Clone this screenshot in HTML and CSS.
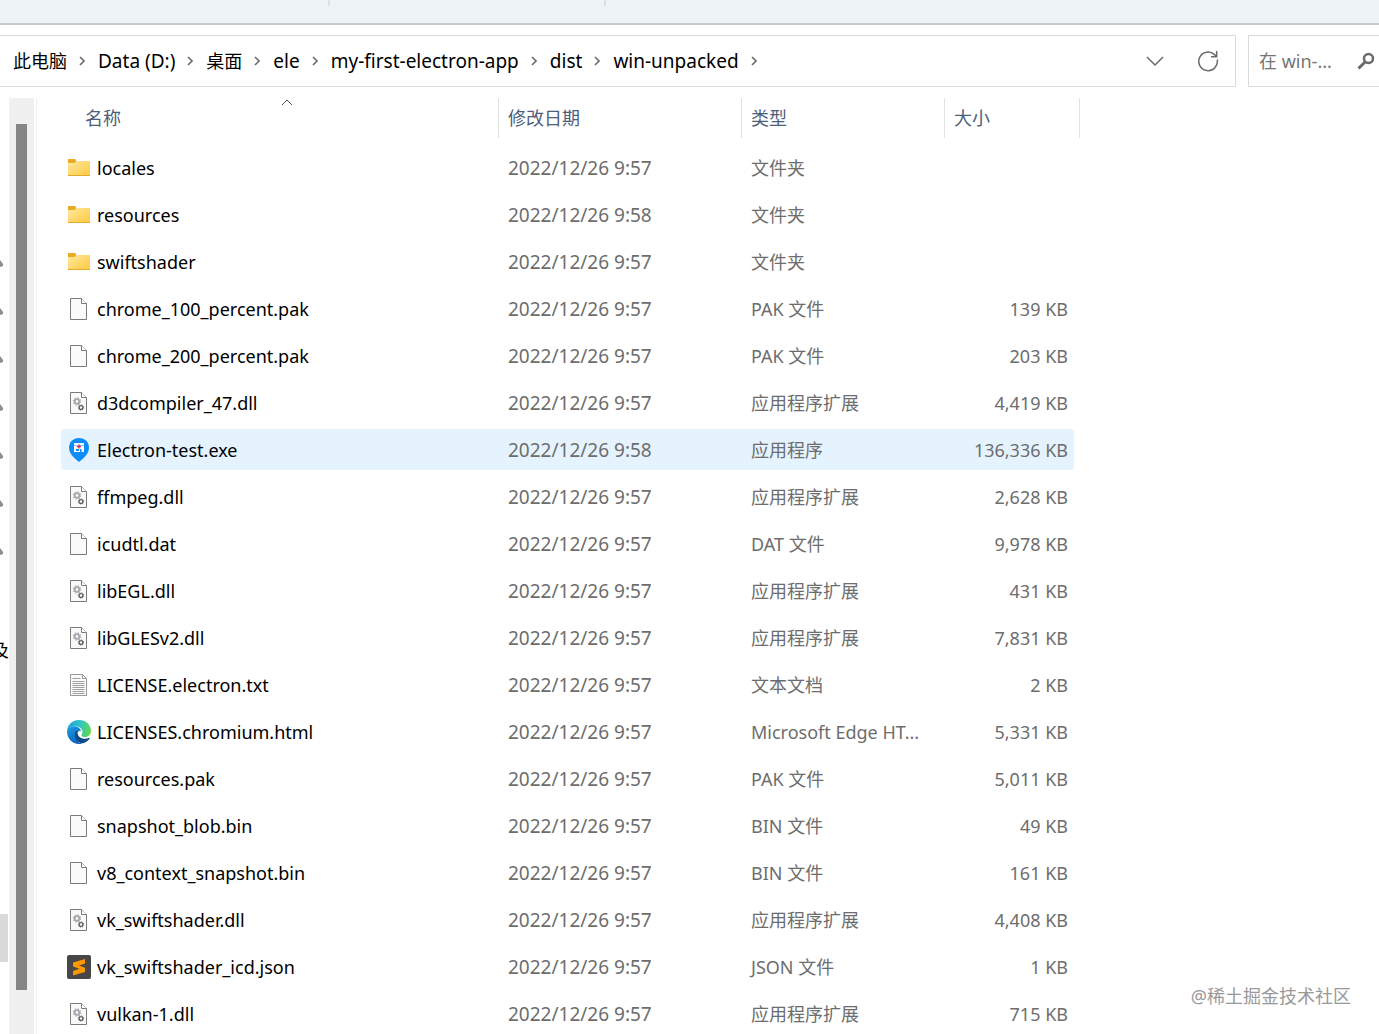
FILE: index.html
```html
<!DOCTYPE html>
<html lang="zh-CN">
<head>
    <meta charset="UTF-8">
    <meta name="viewport" content="width=device-width, initial-scale=1.0">
    <title>win-unpacked</title>
    <link rel="stylesheet" href="styles.css">
</head>
<body>
    <!-- icons -->
    <svg class="defs" aria-hidden="true">
        <defs>
            <linearGradient id="folderFill" x1="0" y1="0" x2="1" y2="1">
                <stop offset="0" stop-color="#ffe8a0"/><stop offset="1" stop-color="#fdc93f"/>
            </linearGradient>
            <linearGradient id="edgeTop" x1="0" y1="0.3" x2="1" y2="0.5">
                <stop offset="0" stop-color="#1e9fe0"/><stop offset="0.5" stop-color="#2fc3c8"/><stop offset="1" stop-color="#62d94e"/>
            </linearGradient>
            <linearGradient id="edgeLeft" x1="0" y1="0" x2="0.6" y2="1">
                <stop offset="0" stop-color="#1b9de2"/><stop offset="1" stop-color="#0f62b8"/>
            </linearGradient>
        </defs>
        <symbol id="folder" viewBox="0 0 24 24">
            <path d="M1 3h7l1 1v4H1z" fill="#e9ab26"/>
            <path d="M1 7h7l1-2h14v15H1z" fill="url(#folderFill)"/>
            <path d="M1 19.500h22" stroke="#e3a92f"/>
        </symbol>
        <symbol id="file" viewBox="0 0 24 24">
            <path d="M3.500 1.500h11l5 5v16h-16z" fill="#fafafa" stroke="#7b7b7b"/>
            <path d="M14.500 1.500v5h5" fill="#fff" stroke="#7b7b7b"/>
        </symbol>
        <symbol id="dll" viewBox="0 0 24 24">
            <use href="#file"/>
            <circle cx="10" cy="10.500" r="2.300" fill="none" stroke="#a4a9ad" stroke-width="1.800"/>
            <circle cx="10" cy="10.500" r="3.600" fill="none" stroke="#a4a9ad" stroke-width="1.200" stroke-dasharray="1.400 1.427"/>
            <circle cx="14" cy="16.500" r="1.900" fill="none" stroke="#5f6366" stroke-width="1.300"/>
            <circle cx="14" cy="16.500" r="2.700" fill="none" stroke="#5f6366" stroke-width=".8" stroke-dasharray="1.060 1.060"/>
        </symbol>
        <symbol id="txt" viewBox="0 0 24 24">
            <path d="M3.500 1.500h12l4 4v17h-16z" fill="#fafafa" stroke="#9a9a9a"/>
            <path d="M15.500 1.500v4h4" fill="none" stroke="#9a9a9a"/>
            <path d="M5.500 5.500h8M5.500 8.500h12M5.500 10.500h12M5.500 12.500h12M5.500 14.500h12M5.500 16.500h12M5.500 18.500h12M5.500 20.500h12" stroke="#a0a0a0"/>
        </symbol>
        <symbol id="exe" viewBox="0 0 24 24">
            <path d="M12 0C6 0 2 4.400 2 9.800c0 4.200 2.600 7.600 5.600 10.400L12 24l4.400-3.800c3-2.800 5.600-6.200 5.600-10.400C22 4.400 18 0 12 0z" fill="#0a8cfb"/>
            <path d="M7 5h10v2H7zM7 7.500h10V14h-2.500v-3H13v3H7z" fill="#fff"/>
            <path d="M9 11h3v2H9z" fill="#0a8cfb"/>
            <path d="M11.300 6.500h1.400V8H14v1.300h-1.300v1.300h-1.400V9.300H10V8h1.300z" fill="#d8274b"/>
        </symbol>
        <symbol id="edge" viewBox="0 0 24 24">
            <path d="M12 0C5.500 0 .6 4.600 0 11c1.500-3 4.600-4.600 8.500-4.600 4.500 0 7 2.600 7 5.600 0 1.600-1 2.200-1 3.200 0 1.200 1.500 1.900 3.500 1.900 3.500 0 6-2.400 6-6.300C24 4.700 18.600 0 12 0z" fill="url(#edgeTop)"/>
            <path d="M0 11.500C0 18.500 5.400 24 12 24c1.200 0 2.400-.2 3.500-.6-4.500 0-6-3.600-6-7.600 0-3.300 1.300-5.200 4.600-4.800C13.100 8 10.500 6.600 7.600 6.600 3.400 6.600.6 9 0 11.500z" fill="url(#edgeLeft)"/>
            <path d="M8.500 12c-2 6 2 11.600 7.500 11.300 3-.8 5.400-2.600 6.800-5 .2-.5-.1-.8-.6-.6-1.400.7-2.800 1-4.200 1-4.500 0-7.500-2.700-7.500-6 0-.9.300-1.700.9-2.300-1.500.1-2.500.6-2.900 1.600z" fill="#114a8b"/>
        </symbol>
        <symbol id="sublime" viewBox="0 0 24 24">
            <rect width="24" height="24" rx="2" fill="#474747"/>
            <path d="M18 4v4.500l-6 2 6 2.300V17L6 20.500V16l6.500-2.200L6 11.500v-4z" fill="#ff9800"/>
        </symbol>
        <symbol id="arrow" viewBox="0 0 7 10">
            <path d="M1 1l4 4-4 4" fill="none" stroke="#6d6d6d" stroke-width="1.700"/>
        </symbol>
        <symbol id="pin" viewBox="0 0 8 10">
            <path d="M1 2l3-1 3 4v2L4 8z" fill="#8c8c8c"/>
        </symbol>
    </svg>

    <div class="tabs"><span class="tick"></span><span class="tick"></span></div>

    <div class="toolbar">
        <div class="address">
            <nav class="crumbs">
                <svg class="arrow"><use href="#arrow"/></svg>
                <a href="#" class="cjk">此电脑</a>
                <svg class="arrow"><use href="#arrow"/></svg>
                <a href="#">Data (D:)</a>
                <svg class="arrow"><use href="#arrow"/></svg>
                <a href="#" class="cjk">桌面</a>
                <svg class="arrow"><use href="#arrow"/></svg>
                <a href="#">ele</a>
                <svg class="arrow"><use href="#arrow"/></svg>
                <a href="#">my-first-electron-app</a>
                <svg class="arrow"><use href="#arrow"/></svg>
                <a href="#">dist</a>
                <svg class="arrow"><use href="#arrow"/></svg>
                <a href="#">win-unpacked</a>
                <svg class="arrow"><use href="#arrow"/></svg>
            </nav>
            <button type="button" aria-label="历史记录">
                <svg width="20" height="20" viewBox="0 0 20 20"><path d="M2 6l8 8 8-8" fill="none" stroke="#6a6a6a" stroke-width="1.500"/></svg>
            </button>
            <button type="button" aria-label="刷新">
                <svg width="22" height="22" viewBox="0 0 22 22"><path d="M20.200 9.500A9.300 9.300 0 1 1 17.500 4.600L19.500 6.500M19.700 1v5.700H14" fill="none" stroke="#6a6a6a" stroke-width="1.500"/></svg>
            </button>
        </div>
        <div class="search">
            <input type="text" aria-label="搜索" placeholder="在 win-...">
            <button type="button" aria-label="搜索">
                <svg width="18" height="18" viewBox="0 0 18 18"><circle cx="11.500" cy="6.500" r="4.500" fill="none" stroke="#6a6a6a" stroke-width="2.500"/><path d="M8.300 9.700L1.500 16.500" stroke="#6a6a6a" stroke-width="3"/></svg>
            </button>
        </div>
    </div>

    <div class="main">
        <ul class="sidebar">
            <li><svg class="pin"><use href="#pin"/></svg></li>
            <li><svg class="pin"><use href="#pin"/></svg></li>
            <li><svg class="pin"><use href="#pin"/></svg></li>
            <li><svg class="pin"><use href="#pin"/></svg></li>
            <li><svg class="pin"><use href="#pin"/></svg></li>
            <li><svg class="pin"><use href="#pin"/></svg></li>
            <li><svg class="pin"><use href="#pin"/></svg></li>
            <li class="recent">及</li>
            <li class="current"></li>
        </ul>
        <div class="scrollbar"><div class="thumb"></div></div>

        <div class="content">
            <table class="files">
                <colgroup>
                    <col class="col-name"><col class="col-date"><col class="col-type"><col class="col-size"><col class="col-end">
                </colgroup>
                <thead>
                    <tr>
                        <th><div class="head name-head">名称
                            <svg class="sort" width="12" height="8" viewBox="0 0 12 8"><path d="M1 7l5-5 5 5" fill="none" stroke="#555"/></svg>
                        </div></th>
                        <th><div class="head">修改日期</div></th>
                        <th><div class="head">类型</div></th>
                        <th colspan="2"><div class="head">大小</div></th>
                    </tr>
                </thead>
                <tbody>
                    <tr><td><div class="name"><svg><use href="#folder"/></svg>locales</div></td><td class="date">2022/12/26 9:57</td><td>文件夹</td><td class="size"></td></tr>
                    <tr><td><div class="name"><svg><use href="#folder"/></svg>resources</div></td><td class="date">2022/12/26 9:58</td><td>文件夹</td><td class="size"></td></tr>
                    <tr><td><div class="name"><svg><use href="#folder"/></svg>swiftshader</div></td><td class="date">2022/12/26 9:57</td><td>文件夹</td><td class="size"></td></tr>
                    <tr><td><div class="name"><svg><use href="#file"/></svg>chrome_100_percent.pak</div></td><td class="date">2022/12/26 9:57</td><td>PAK 文件</td><td class="size">139 KB</td></tr>
                    <tr><td><div class="name"><svg><use href="#file"/></svg>chrome_200_percent.pak</div></td><td class="date">2022/12/26 9:57</td><td>PAK 文件</td><td class="size">203 KB</td></tr>
                    <tr><td><div class="name"><svg><use href="#dll"/></svg>d3dcompiler_47.dll</div></td><td class="date">2022/12/26 9:57</td><td>应用程序扩展</td><td class="size">4,419 KB</td></tr>
                    <tr class="selected"><td><div class="name"><svg><use href="#exe"/></svg>Electron-test.exe</div></td><td class="date">2022/12/26 9:58</td><td>应用程序</td><td class="size">136,336 KB</td></tr>
                    <tr><td><div class="name"><svg><use href="#dll"/></svg>ffmpeg.dll</div></td><td class="date">2022/12/26 9:57</td><td>应用程序扩展</td><td class="size">2,628 KB</td></tr>
                    <tr><td><div class="name"><svg><use href="#file"/></svg>icudtl.dat</div></td><td class="date">2022/12/26 9:57</td><td>DAT 文件</td><td class="size">9,978 KB</td></tr>
                    <tr><td><div class="name"><svg><use href="#dll"/></svg>libEGL.dll</div></td><td class="date">2022/12/26 9:57</td><td>应用程序扩展</td><td class="size">431 KB</td></tr>
                    <tr><td><div class="name"><svg><use href="#dll"/></svg>libGLESv2.dll</div></td><td class="date">2022/12/26 9:57</td><td>应用程序扩展</td><td class="size">7,831 KB</td></tr>
                    <tr><td><div class="name"><svg><use href="#txt"/></svg>LICENSE.electron.txt</div></td><td class="date">2022/12/26 9:57</td><td>文本文档</td><td class="size">2 KB</td></tr>
                    <tr><td><div class="name"><svg><use href="#edge"/></svg>LICENSES.chromium.html</div></td><td class="date">2022/12/26 9:57</td><td>Microsoft Edge HT...</td><td class="size">5,331 KB</td></tr>
                    <tr><td><div class="name"><svg><use href="#file"/></svg>resources.pak</div></td><td class="date">2022/12/26 9:57</td><td>PAK 文件</td><td class="size">5,011 KB</td></tr>
                    <tr><td><div class="name"><svg><use href="#file"/></svg>snapshot_blob.bin</div></td><td class="date">2022/12/26 9:57</td><td>BIN 文件</td><td class="size">49 KB</td></tr>
                    <tr><td><div class="name"><svg><use href="#file"/></svg>v8_context_snapshot.bin</div></td><td class="date">2022/12/26 9:57</td><td>BIN 文件</td><td class="size">161 KB</td></tr>
                    <tr><td><div class="name"><svg><use href="#dll"/></svg>vk_swiftshader.dll</div></td><td class="date">2022/12/26 9:57</td><td>应用程序扩展</td><td class="size">4,408 KB</td></tr>
                    <tr><td><div class="name"><svg><use href="#sublime"/></svg>vk_swiftshader_icd.json</div></td><td class="date">2022/12/26 9:57</td><td>JSON 文件</td><td class="size">1 KB</td></tr>
                    <tr><td><div class="name"><svg><use href="#dll"/></svg>vulkan-1.dll</div></td><td class="date">2022/12/26 9:57</td><td>应用程序扩展</td><td class="size">715 KB</td></tr>
                </tbody>
            </table>
        </div>
    </div>
    <div class="watermark">@稀土掘金技术社区</div>
</body>
</html>
```
FILE: styles.css
```css
* {
	box-sizing: border-box;
}
body {
	margin: 0;
	height: 100vh;
	overflow: hidden;
	display: flex;
	flex-direction: column;
	background-color: #fff;
	color: #000;
	font-family: "Noto Sans", "Noto Sans CJK SC", sans-serif;
	font-size: 18px;
	line-height: 24px;
}
button {
	border: none;
	background: none;
	padding: 0;
	display: flex;
}
.defs {
	position: absolute;
	width: 0;
	height: 0;
}

/* strip under the tabs */
.tabs {
	flex: none;
	height: 25px;
	display: flex;
	gap: 274px;
	padding-left: 328px;
	background-color: #eef3f8;
	border-bottom: 2px solid #c3cace;
}
.tick {
	width: 2px;
	height: 6px;
	background-color: #dce1e6;
}

/* address and search */
.toolbar {
	flex: none;
	display: flex;
	gap: 12px;
	height: 62px;
	padding-top: 10px;
}
.address {
	flex: 1;
	display: flex;
	align-items: center;
	gap: 32px;
	padding-right: 16px;
	border: 1px solid #d9dbdc;
	border-left: none;
}
.crumbs {
	flex: 1;
	display: flex;
	align-items: center;
	gap: 12px;
	margin-left: -6px;
	padding-bottom: 1px;
	font-size: 19px;
	white-space: nowrap;
}
.crumbs a {
	color: #000;
	text-decoration: none;
}
.crumbs .cjk {
	font-size: 18px;
}
.arrow {
	flex: none;
	width: 7px;
	height: 10px;
}
.search {
	width: 131px;
	display: flex;
	align-items: center;
	justify-content: space-between;
	padding: 0 4px 0 10px;
	border: 1px solid #d9dbdc;
	border-right: none;
}
.search input {
	width: 88px;
	border: none;
	padding: 0;
	background: none;
	font: inherit;
}
.search input::placeholder {
	color: #757575;
}

.main {
	flex: 1;
	min-height: 0;
	display: flex;
	padding-top: 11px;
}
.sidebar {
	flex: none;
	width: 9px;
	margin: 0;
	padding: 142px 0 0;
	list-style: none;
	overflow: hidden;
}
.sidebar li {
	height: 48px;
	display: flex;
	align-items: center;
}
.pin {
	flex: none;
	width: 8px;
	height: 10px;
	margin-left: -4px;
}
.sidebar .recent {
	justify-content: flex-end;
	margin-top: 50px;
}
.sidebar .current {
	margin: 240px 1px 0 0;
	background-color: #d9d9d9;
}
.scrollbar {
	flex: none;
	width: 25px;
	padding: 26px 7px 44px;
	background-color: #f0f0f0;
}
.thumb {
	height: 100%;
	background-color: #858585;
}
.content {
	flex: 1;
	margin-left: 2px;
	padding-left: 24px;
	border-left: 1px solid #f3f3f3;
	overflow: hidden;
}

/* file list */
.files {
	width: 1019px;
	margin-top: -6px;
	table-layout: fixed;
	border-collapse: separate;
	border-spacing: 0 6px;
}
.col-name {
	width: 438px;
}
.col-date {
	width: 243px;
}
.col-type {
	width: 203px;
}
.col-size {
	width: 129px;
}
.col-end {
	width: 6px;
}
.files th {
	height: 43px;
	padding: 0;
	vertical-align: top;
	text-align: left;
	font-weight: normal;
	color: #4c607a;
}
.head {
	position: relative;
	height: 40px;
	padding: 8px 0 0 9px;
	border-right: 1px solid #e2e2e2;
}
.name-head {
	padding-left: 24px;
}
.sort {
	position: absolute;
	top: 0;
	left: 220px;
}
.files td {
	height: 41px;
	padding: 0 0 0 9px;
	white-space: nowrap;
	color: #6d6d6d;
}
.files td:first-child {
	padding-left: 6px;
	color: #000;
}
.name {
	display: flex;
	align-items: center;
	gap: 6px;
}
.name svg {
	width: 24px;
	height: 24px;
}
.files .date {
	font-size: 19px;
}
.files .size {
	padding-right: 6px;
	text-align: right;
}
.selected td {
	background-color: #e5f3ff;
}
.selected td:first-child {
	border-radius: 3px 0 0 3px;
}
.selected .size {
	border-radius: 0 3px 3px 0;
}
.watermark {
	position: absolute;
	right: 28px;
	bottom: 26px;
	color: #999;
}
```
